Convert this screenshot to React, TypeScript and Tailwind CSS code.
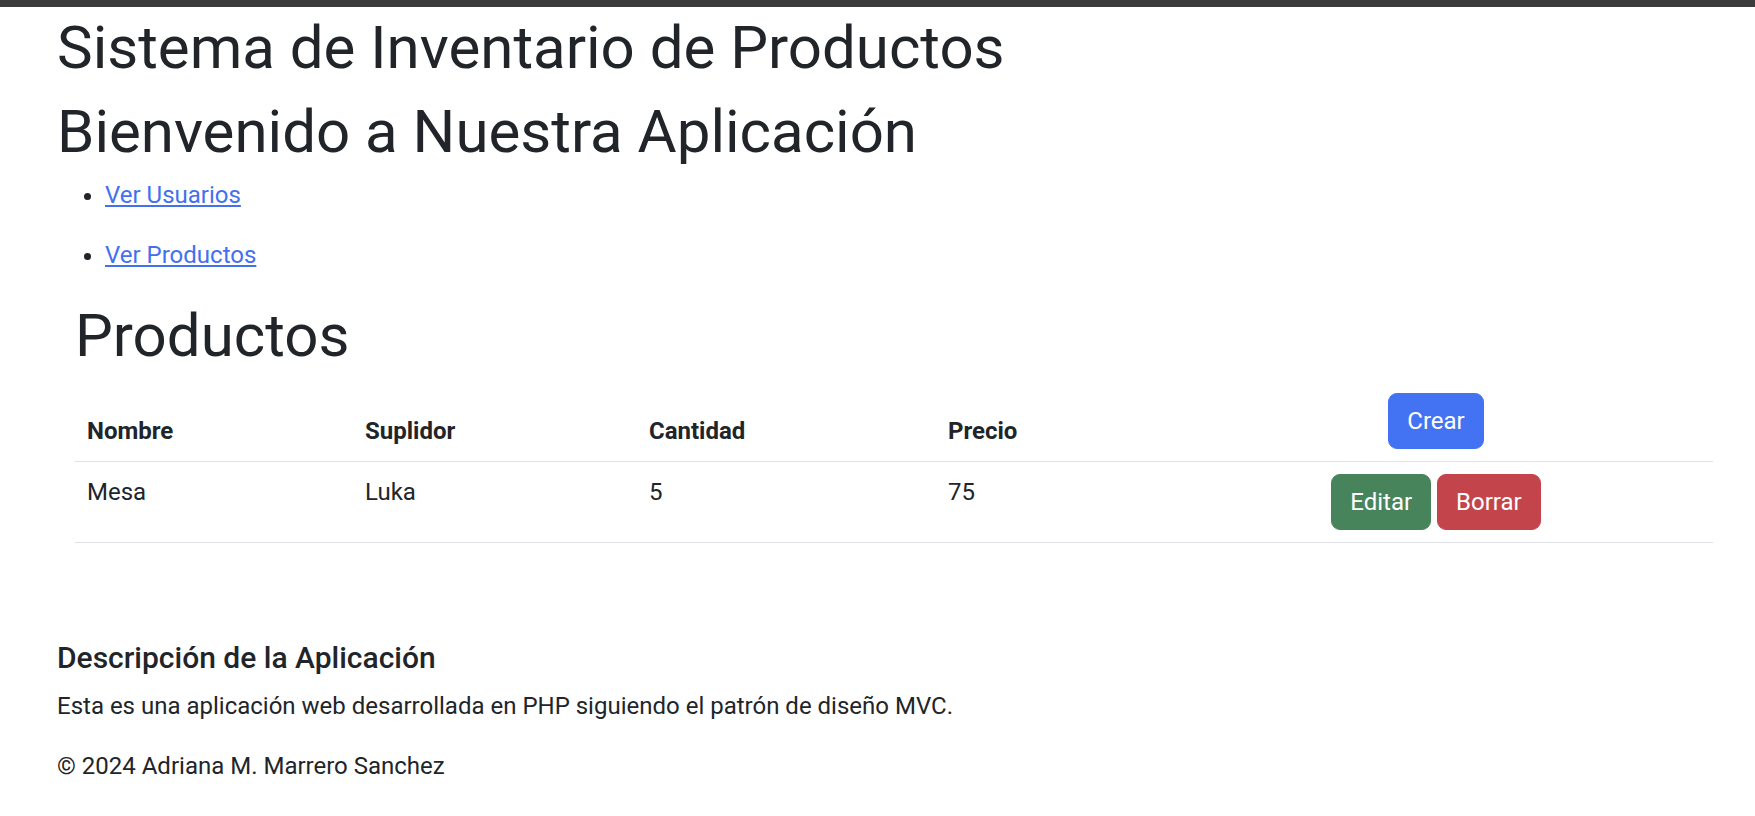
export default function App() {
  const rows = [{ nombre: "Mesa", suplidor: "Luka", cantidad: 5, precio: 75 }];

  return (
    <div className="min-h-screen bg-white text-[#212529] font-['Roboto','Liberation_Sans',sans-serif]">
      <div className="h-[7px] bg-[#3c3c3c]" />

      <div className="pl-[57px] pr-[42px]">
        <h1 className="mt-[2px] mb-[9px] pt-[3px] text-[60px] leading-[72px] font-normal">
          Sistema de Inventario de Productos
        </h1>
        <h1 className="mb-[9px] pt-[3px] text-[60px] leading-[72px] font-normal">
          Bienvenido a Nuestra Aplicación
        </h1>

        <ul className="list-disc pl-[48px] text-[24px] leading-[36px]">
          <li className="mb-[24px]">
            <a href="#" className="text-[#4370f0] underline">
              Ver Usuarios
            </a>
          </li>
          <li className="mb-[24px]">
            <a href="#" className="text-[#4370f0] underline">
              Ver Productos
            </a>
          </li>
        </ul>

        <div className="pl-[18px]">
          <h1 className="mb-[9px] pt-[3px] text-[60px] leading-[72px] font-normal">Productos</h1>

          <table className="w-full table-fixed border-collapse text-left text-[24px] leading-[36px]">
            <colgroup>
              <col className="w-[278px]" />
              <col className="w-[284px]" />
              <col className="w-[299px]" />
              <col className="w-[223px]" />
              <col />
            </colgroup>
            <thead className="align-bottom">
              <tr className="border-b border-[#dee2e6]">
                <th className="p-[12px] font-bold">Nombre</th>
                <th className="p-[12px] font-bold">Suplidor</th>
                <th className="p-[12px] font-bold">Cantidad</th>
                <th className="p-[12px] font-bold">Precio</th>
                <th className="p-[12px] text-center">
                  <button className="rounded-[9px] border border-[#4373f3] bg-[#4373f3] px-[18px] py-[9px] font-normal text-white">
                    Crear
                  </button>
                </th>
              </tr>
            </thead>
            <tbody className="align-top">
              {rows.map((r) => (
                <tr key={r.nombre} className="border-b border-[#dee2e6]">
                  <td className="p-[12px]">{r.nombre}</td>
                  <td className="p-[12px]">{r.suplidor}</td>
                  <td className="p-[12px]">{r.cantidad}</td>
                  <td className="p-[12px]">{r.precio}</td>
                  <td className="p-[12px]">
                    <div className="flex justify-center gap-[6px]">
                      <button className="rounded-[9px] border border-[#47845b] bg-[#47845b] px-[18px] py-[9px] text-white">
                        Editar
                      </button>
                      <button className="rounded-[9px] border border-[#c4444c] bg-[#c4444c] px-[18px] py-[9px] text-white">
                        Borrar
                      </button>
                    </div>
                  </td>
                </tr>
              ))}
            </tbody>
          </table>
        </div>

        <footer className="mt-[97px]">
          <h5 className="mb-[12px] text-[30px] leading-[36px] font-medium">
            Descripción de la Aplicación
          </h5>
          <p className="mb-[24px] text-[24px] leading-[36px]">
            Esta es una aplicación web desarrollada en PHP siguiendo el patrón de diseño MVC.
          </p>
          <p className="text-[24px] leading-[36px]">© 2024 Adriana M. Marrero Sanchez</p>
        </footer>
      </div>
    </div>
  );
}
